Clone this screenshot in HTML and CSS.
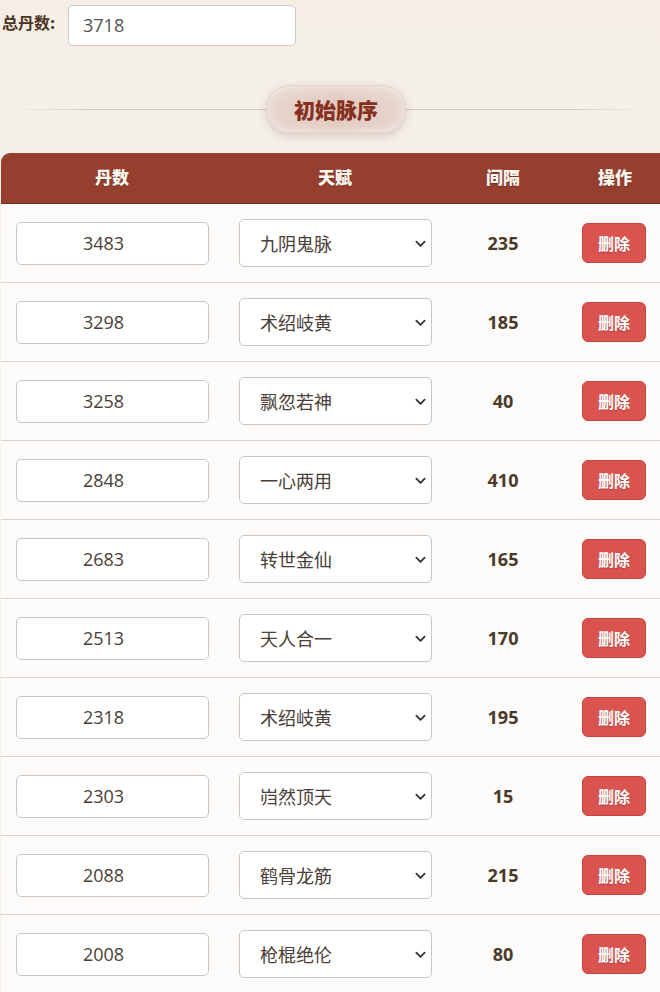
FILE: index.html
```html
<!DOCTYPE html>
<html lang="zh">
<head>
<meta charset="utf-8">
<title>初始脉序</title>
<link rel="stylesheet" href="styles.css">
</head>
<body>
<div class="top">
  <label class="total-label">总丹数:</label>
  <input class="total-input" type="text" value="3718">
</div>
<div class="section-title">
  <span class="line"></span>
  <span class="badge">初始脉序</span>
</div>
<div class="table">
  <div class="thead">
    <div>丹数</div><div>天赋</div><div>间隔</div><div>操作</div>
  </div>
  <div class="row">
    <div class="cell"><input class="num" type="text" value="3483"></div>
    <div class="cell"><div class="sel">九阴鬼脉<svg viewBox="0 0 12 8"><path d="M1.5 1.5 6 6 10.5 1.5"/></svg></div></div>
    <div class="cell gap">235</div>
    <div class="cell"><button class="del">删除</button></div>
  </div>
  <div class="row">
    <div class="cell"><input class="num" type="text" value="3298"></div>
    <div class="cell"><div class="sel">术绍岐黄<svg viewBox="0 0 12 8"><path d="M1.5 1.5 6 6 10.5 1.5"/></svg></div></div>
    <div class="cell gap">185</div>
    <div class="cell"><button class="del">删除</button></div>
  </div>
  <div class="row">
    <div class="cell"><input class="num" type="text" value="3258"></div>
    <div class="cell"><div class="sel">飘忽若神<svg viewBox="0 0 12 8"><path d="M1.5 1.5 6 6 10.5 1.5"/></svg></div></div>
    <div class="cell gap">40</div>
    <div class="cell"><button class="del">删除</button></div>
  </div>
  <div class="row">
    <div class="cell"><input class="num" type="text" value="2848"></div>
    <div class="cell"><div class="sel">一心两用<svg viewBox="0 0 12 8"><path d="M1.5 1.5 6 6 10.5 1.5"/></svg></div></div>
    <div class="cell gap">410</div>
    <div class="cell"><button class="del">删除</button></div>
  </div>
  <div class="row">
    <div class="cell"><input class="num" type="text" value="2683"></div>
    <div class="cell"><div class="sel">转世金仙<svg viewBox="0 0 12 8"><path d="M1.5 1.5 6 6 10.5 1.5"/></svg></div></div>
    <div class="cell gap">165</div>
    <div class="cell"><button class="del">删除</button></div>
  </div>
  <div class="row">
    <div class="cell"><input class="num" type="text" value="2513"></div>
    <div class="cell"><div class="sel">天人合一<svg viewBox="0 0 12 8"><path d="M1.5 1.5 6 6 10.5 1.5"/></svg></div></div>
    <div class="cell gap">170</div>
    <div class="cell"><button class="del">删除</button></div>
  </div>
  <div class="row">
    <div class="cell"><input class="num" type="text" value="2318"></div>
    <div class="cell"><div class="sel">术绍岐黄<svg viewBox="0 0 12 8"><path d="M1.5 1.5 6 6 10.5 1.5"/></svg></div></div>
    <div class="cell gap">195</div>
    <div class="cell"><button class="del">删除</button></div>
  </div>
  <div class="row">
    <div class="cell"><input class="num" type="text" value="2303"></div>
    <div class="cell"><div class="sel">岿然顶天<svg viewBox="0 0 12 8"><path d="M1.5 1.5 6 6 10.5 1.5"/></svg></div></div>
    <div class="cell gap">15</div>
    <div class="cell"><button class="del">删除</button></div>
  </div>
  <div class="row">
    <div class="cell"><input class="num" type="text" value="2088"></div>
    <div class="cell"><div class="sel">鹤骨龙筋<svg viewBox="0 0 12 8"><path d="M1.5 1.5 6 6 10.5 1.5"/></svg></div></div>
    <div class="cell gap">215</div>
    <div class="cell"><button class="del">删除</button></div>
  </div>
  <div class="row">
    <div class="cell"><input class="num" type="text" value="2008"></div>
    <div class="cell"><div class="sel">枪棍绝伦<svg viewBox="0 0 12 8"><path d="M1.5 1.5 6 6 10.5 1.5"/></svg></div></div>
    <div class="cell gap">80</div>
    <div class="cell"><button class="del">删除</button></div>
  </div>
</div>
</body>
</html>
```
FILE: styles.css
```css
html, body {
  margin: 0;
  padding: 0;
}
body {
  width: 660px;
  min-height: 992px;
  overflow: hidden;
  background: linear-gradient(180deg, #f4eee7 0%, #f6f2ed 40%, #f3eee9 100%);
  font-family: "Open Sans", "Noto Sans CJK SC", sans-serif;
  color: #4a3a2c;
}
.top {
  display: flex;
  align-items: center;
  padding: 5px 0 0 2px;
  height: 40px;
}
.total-label {
  font-family: "Noto Sans CJK SC", sans-serif;
  font-weight: 700;
  font-size: 16px;
  color: #4a3420;
  width: 66px;
  margin-top: -7px;
}
.total-input {
  box-sizing: border-box;
  width: 228px;
  height: 41px;
  border: 1px solid #cfcac4;
  border-radius: 5px;
  background: #fff;
  padding: 0 14px;
  font-family: "Open Sans", "Noto Sans CJK SC", sans-serif;
  font-size: 18px;
  color: #555;
  outline: none;
}
.section-title {
  position: relative;
  display: flex;
  justify-content: center;
  align-items: center;
  height: 48px;
  margin-top: 40px;
  margin-bottom: 20px;
}
.section-title .line {
  position: absolute;
  left: 14px;
  right: 14px;
  top: 24px;
  height: 1px;
  background: linear-gradient(90deg, rgba(210,200,192,0) 0%, #d3c9c1 12%, #d3c9c1 88%, rgba(210,200,192,0) 100%);
}
.badge {
  position: relative;
  box-sizing: border-box;
  width: 140px;
  height: 48px;
  margin-left: 12px;
  border-radius: 24px;
  display: flex;
  align-items: center;
  justify-content: center;
  font-family: "Noto Sans CJK SC", sans-serif;
  font-weight: 900;
  font-size: 21px;
  color: #86301f;
  background: radial-gradient(ellipse at 50% 55%, #dfc5ba 0%, #e6d3ca 55%, #eee3dc 100%);
  border: 1px solid #e2d4cb;
  box-shadow: 0 3px 8px rgba(140, 90, 70, 0.25), inset 0 0 6px rgba(255,255,255,0.5);
}
.table {
  margin-left: 1px;
  width: 670px;
  background: #fdfbf9;
  border-radius: 9px 9px 0 0;
}
.thead {
  display: grid;
  grid-template-columns: 222px 224px 112px 112px;
  height: 50px;
  align-items: center;
  background: #963f2e;
  border-bottom: 1px solid #6e2d20;
  border-radius: 9px 9px 0 0;
  font-family: "Noto Sans CJK SC", sans-serif;
  font-weight: 900;
  font-size: 17px;
  color: #fff8f0;
  text-align: center;
  text-shadow: 0 1px 1px rgba(0,0,0,0.25);
}
.thead div {
  margin-top: -3px;
}
.row {
  display: grid;
  grid-template-columns: 222px 224px 112px 112px;
  height: 78px;
  border-bottom: 1px solid #d9d3cd;
  align-items: center;
}
.cell {
  display: flex;
  justify-content: center;
  align-items: center;
}
.num {
  box-sizing: border-box;
  width: 193px;
  height: 43px;
  margin-left: 1px;
  border: 1px solid #cbc6c1;
  border-radius: 5px;
  background: #fff;
  text-align: center;
  padding: 0 18px 0 0;
  font-family: "Open Sans", "Noto Sans CJK SC", sans-serif;
  font-size: 18px;
  color: #4a4038;
  outline: none;
}
.sel {
  position: relative;
  box-sizing: border-box;
  width: 193px;
  height: 48px;
  margin-left: 1px;
  border: 1px solid #cbc6c1;
  border-radius: 5px;
  background: #fff;
  display: flex;
  align-items: center;
  padding-left: 20px;
  font-family: "Noto Sans CJK SC", sans-serif;
  font-size: 18px;
  color: #4a4038;
}
.sel svg {
  position: absolute;
  right: 5px;
  top: 20px;
  width: 11px;
  height: 8px;
  fill: none;
  stroke: #333;
  stroke-width: 2;
  stroke-linecap: round;
  stroke-linejoin: round;
}
.gap {
  font-family: "Open Sans", "Noto Sans CJK SC", sans-serif;
  font-weight: 700;
  font-size: 18px;
  color: #4a3a2a;
}
.del {
  box-sizing: border-box;
  width: 64px;
  height: 40px;
  margin-left: -2px;
  border: 1px solid #c9443f;
  border-radius: 6px;
  background: #d9534f;
  font-family: "Noto Sans CJK SC", sans-serif;
  font-weight: 700;
  font-size: 16px;
  color: #fff;
  text-shadow: 0 1px 1px rgba(0,0,0,0.2);
  padding: 0;
}
```
